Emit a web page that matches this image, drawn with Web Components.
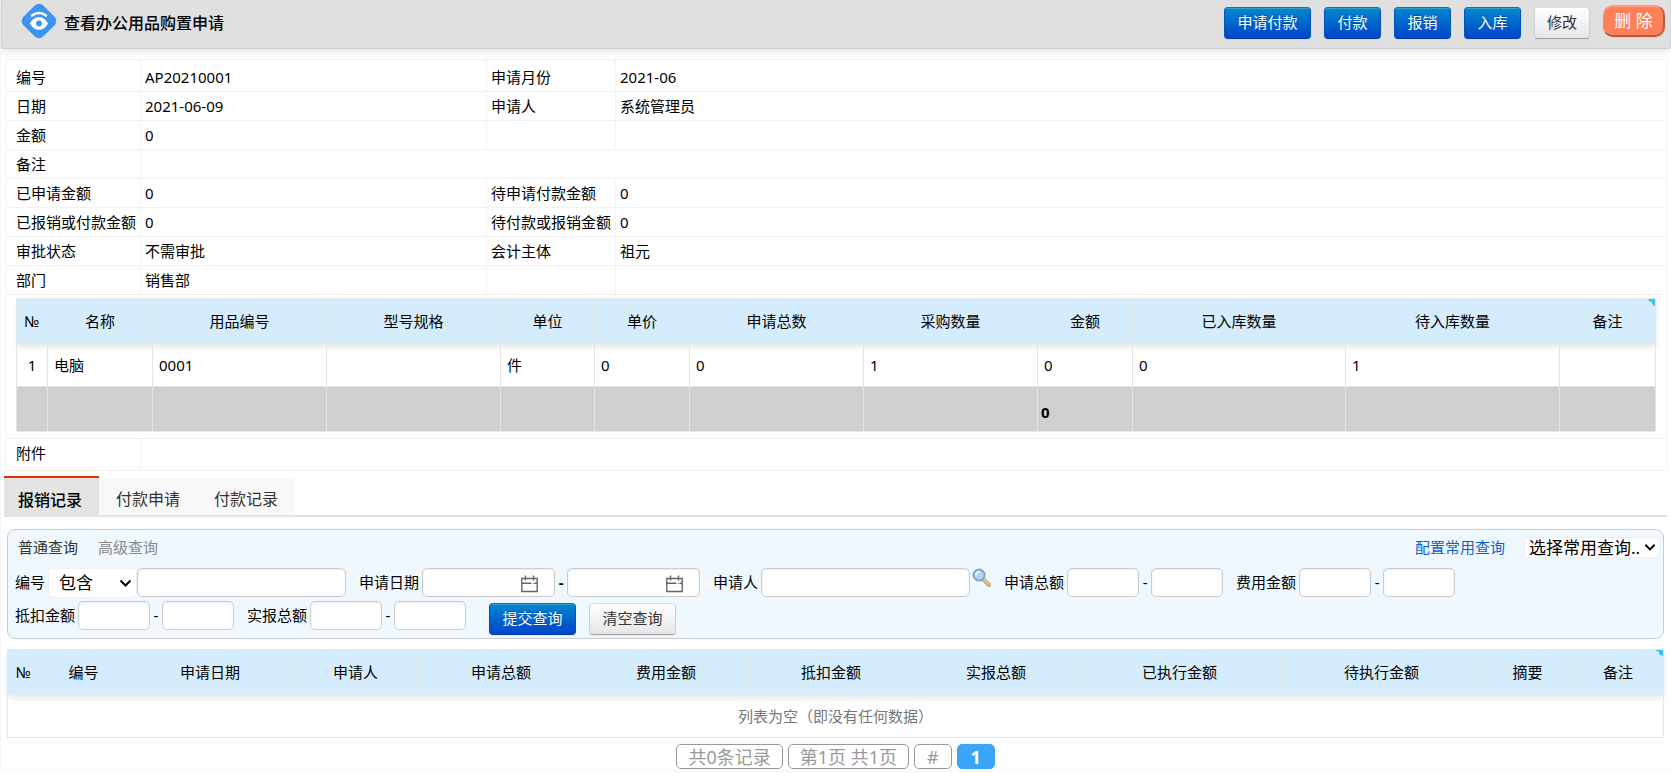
<!DOCTYPE html>
<html lang="zh-CN">
<head>
<meta charset="utf-8">
<title>查看办公用品购置申请</title>
<style>
  html { background: #fafafa; }
  body {
    margin: 0;
    color: #000;
    font: 15px/20px "Noto Sans", "Noto Sans CJK SC", sans-serif;
  }
</style>
</head>
<body>
<purchase-page></purchase-page>

<template id="tpl-page">
  <style>
    :host { display: block; background: #fff; border-left: 1px solid #f2f7fd; }
    .records { display: flex; flex-direction: column; gap: 10px; padding: 12px 7px 0 6px; }
    tab-strip { margin: 5px 4px 0 3px; }
    detail-sheet { margin: 10px 3px 0 4px; }
    page-pager { margin-top: -4px; }
  </style>
  <page-header heading="查看办公用品购置申请">
    <ui-button kind="primary" wide>申请付款</ui-button>
    <ui-button kind="primary">付款</ui-button>
    <ui-button kind="primary">报销</ui-button>
    <ui-button kind="primary">入库</ui-button>
    <ui-button>修改</ui-button>
    <ui-button kind="danger">删 除</ui-button>
  </page-header>
  <detail-sheet><data-grid id="items"></data-grid></detail-sheet>
  <tab-strip></tab-strip>
  <div class="records">
    <query-panel></query-panel>
    <data-grid id="records"></data-grid>
    <page-pager></page-pager>
  </div>
</template>

<template id="tpl-header">
  <style>
    :host {
      display: flex; align-items: flex-start; box-sizing: border-box; height: 49px;
      padding: 0 5px 0 19px; background: #e0e0e0;
      border: 1px solid #d0d3d8; border-top: 0; border-radius: 0 0 3px 3px;
      box-shadow: 0 2px 8px rgba(0,0,0,.13);
    }
    svg { width: 36px; height: 36px; margin-top: 3px; }
    h1 { flex: 1; margin: 12px 0 0 7px; font-size: 16px; line-height: 22px; font-weight: 500; }
    .actions { display: flex; gap: 13px; padding-top: 7px; }
  </style>
  <svg viewBox="0 0 36 36" aria-hidden="true">
    <rect x="4" y="4" width="28" height="28" rx="6" fill="#3d94ee" transform="rotate(45 18 18)"/>
    <path d="M9 20.500C11.500 16 14.500 14.300 18 14.300s6.500 1.700 9 6.200c-2.500 4.500-5.500 6.300-9 6.300s-6.500-1.800-9-6.300z" fill="#fff"/>
    <circle cx="18" cy="20.500" r="2.900" fill="#3d94ee"/>
    <path d="M11 12.500c4-3.300 10-3.300 14 0" fill="none" stroke="#fff" stroke-width="2.600" stroke-linecap="round"/>
  </svg>
  <h1></h1>
  <div class="actions"><slot></slot></div>
</template>

<template id="tpl-button">
  <style>
    :host { display: block; }
    button {
      display: block; box-sizing: border-box; height: 32px; min-width: 55px; padding: 0 12px 2px;
      font: inherit; line-height: 28px; color: #333; white-space: nowrap;
      border: 1px solid; border-color: #dcdcdc #d0d0d0 #a3a3a3; border-radius: 4px;
      background: linear-gradient(#fff, #e6e6e6);
      box-shadow: inset 0 1px 0 rgba(255,255,255,.2), 0 1px 2px rgba(0,0,0,.05);
    }
    :host([kind="primary"]) button {
      min-width: 57px; color: #fff; border-color: #0077b8 #0055b5 #0040a0;
      background: linear-gradient(#08c, #04c);
      text-shadow: 0 -1px 0 rgba(0,0,0,.25);
    }
    :host([wide]) button, :host([kind="primary"][wide]) button { min-width: 87px; }
    :host([kind="danger"]) { margin-top: -2px; }
    :host([kind="danger"]) button {
      width: 62px; padding: 0; font-size: 17px; color: #fff; background: #ff7f59;
      border-color: #f0a088 #c05a3c #b8563a #e8987c; border-width: 1px 2px 2px 1px; border-radius: 10px;
    }
  </style>
  <button type="button"><slot></slot></button>
</template>

<template id="tpl-sheet">
  <style>
    :host { display: block; }
    table { width: 100%; table-layout: fixed; border-collapse: collapse; border: 1px solid #ececec; }
    th, td { box-sizing: border-box; height: 29px; padding: 0 4px; border: 1px solid #f3f3f3; text-align: left; font-weight: 400; white-space: nowrap; }
    th:first-child { padding-left: 10px; }
    tr.edge > * { height: 32px; padding-top: 2px; }
    tr.last > * { padding-top: 0; padding-bottom: 3px; }
    td.nested { padding: 3px 11px 6px 10px; }
    .c1 { width: 135px; } .c2 { width: 346px; } .c3 { width: 129px; }
  </style>
  <table>
    <colgroup><col class="c1"><col class="c2"><col class="c3"><col></colgroup>
    <tbody>
      <tr class="edge"><th scope="row">编号</th><td>AP20210001</td><th scope="row">申请月份</th><td>2021-06</td></tr>
      <tr><th scope="row">日期</th><td>2021-06-09</td><th scope="row">申请人</th><td>系统管理员</td></tr>
      <tr><th scope="row">金额</th><td>0</td><td></td><td></td></tr>
      <tr><th scope="row">备注</th><td colspan="3"></td></tr>
      <tr><th scope="row">已申请金额</th><td>0</td><th scope="row">待申请付款金额</th><td>0</td></tr>
      <tr><th scope="row">已报销或付款金额</th><td>0</td><th scope="row">待付款或报销金额</th><td>0</td></tr>
      <tr><th scope="row">审批状态</th><td>不需审批</td><th scope="row">会计主体</th><td>祖元</td></tr>
      <tr><th scope="row">部门</th><td>销售部</td><td></td><td></td></tr>
      <tr><td class="nested" colspan="4"><slot></slot></td></tr>
      <tr class="edge last"><th scope="row">附件</th><td colspan="3"></td></tr>
    </tbody>
  </table>
</template>

<template id="tpl-grid">
  <style>
    :host { display: block; }
    table { width: 100%; table-layout: fixed; border-collapse: collapse; border: 1px solid #e3e5e8; }
    th, td { box-sizing: border-box; padding: 0 6px; border: 1px solid #e6e6e6; text-align: left; white-space: nowrap; }
    thead { box-shadow: 0 3px 6px rgba(0,0,0,.1); }
    thead th { height: 45px; padding: 0; text-align: center; font-weight: 400; background-color: #d5ecfc; border-color: #e2e8ec; }
    thead th:last-child {
      background-image: linear-gradient(to top right, transparent 50%, #38c2f5 50%);
      background-repeat: no-repeat; background-position: top right; background-size: 7px 7px;
    }
    tbody td { height: 43px; }
    tbody td:first-child, td.empty { text-align: center; }
    td.empty { color: #777; }
    tfoot td { height: 45px; padding: 5px 3px 0; background: #d0d0d0; font-weight: 700; }
  </style>
  <table><colgroup></colgroup><thead><tr></tr></thead><tbody></tbody><tfoot></tfoot></table>
</template>

<template id="tpl-tabs">
  <style>
    :host { display: flex; align-items: flex-end; border-bottom: 2px solid #e3e3e3; }
    button { box-sizing: border-box; height: 36px; padding: 2px 17px 0; border: 0; background: #f8f8f8; font: inherit; font-size: 16px; line-height: 36px; color: #333; }
    button[aria-selected="true"] { height: 39px; padding: 6px 17px 0 14px; border-top: 2px solid #e03000; background: #e4e4e4; color: #000; font-weight: 500; line-height: 32px; }
  </style>
  <button role="tab" aria-selected="true">报销记录</button>
  <button role="tab" aria-selected="false">付款申请</button>
  <button role="tab" aria-selected="false">付款记录</button>
</template>

<template id="tpl-query">
  <style>
    :host { display: block; box-sizing: border-box; height: 110px; padding: 5px 3px 3px 7px; background: #f0f8ff; border: 1px solid #ccc; border-radius: 8px; }
    .modes { display: flex; align-items: center; height: 24px; gap: 20px; padding-left: 3px; }
    a { color: #888; text-decoration: none; }
    a[aria-current] { color: #333; }
    a.setup { margin-left: auto; color: #0a62c4; }
    form { display: flex; flex-wrap: wrap; align-items: flex-start; gap: 3px 13px; margin-top: 9px; }
    .actions { display: flex; gap: 13px; margin: 2px 0 0 10px; }
  </style>
  <div class="modes">
    <a href="#basic" aria-current="true">普通查询</a>
    <a href="#advanced">高级查询</a>
    <a class="setup" href="#setup">配置常用查询</a>
    <ui-select size="saved" label="选择常用查询" value="选择常用查询.."></ui-select>
  </div>
  <form>
    <query-field label="编号" kind="match"></query-field>
    <query-field label="申请日期" kind="dates"></query-field>
    <query-field label="申请人" kind="person"></query-field>
    <query-field label="申请总额" kind="range"></query-field>
    <query-field label="费用金额" kind="range"></query-field>
    <query-field label="抵扣金额" kind="range"></query-field>
    <query-field label="实报总额" kind="range"></query-field>
    <div class="actions"><ui-button kind="primary" wide>提交查询</ui-button><ui-button wide>清空查询</ui-button></div>
  </form>
</template>

<template id="tpl-select">
  <style>
    :host { display: block; position: relative; width: 89px; height: 30px; }
    select {
      appearance: none; display: block; box-sizing: border-box; width: 100%; height: 100%; margin: 0; padding: 0 0 0 10px;
      font: inherit; font-size: 17px; color: #000; background: #fff; border: 1px solid #f0f0f0; border-radius: 5px;
    }
    svg { position: absolute; right: 5px; top: calc(50% - 4px); width: 13px; height: 9px; pointer-events: none; }
    :host([size="saved"]) { width: 136px; height: 21px; margin-left: -1px; }
    :host([size="saved"]) select { padding-left: 4px; line-height: 19px; }
    :host([size="saved"]) svg { right: 4px; width: 12px; }
  </style>
  <select><option></option></select>
  <svg viewBox="0 0 13 9" aria-hidden="true"><path d="M1.500 1.500l5 5 5-5" fill="none" stroke="#000" stroke-width="2"/></svg>
</template>

<template id="tpl-field">
  <style>
    :host { display: flex; line-height: 28px; }
    label { margin-right: 3px; }
    input { box-sizing: border-box; width: 72px; height: 29px; margin: 0; padding: 0 6px; font: inherit; background: #fff; border: 1px solid #ccc; border-radius: 5px; box-shadow: inset 0 1px 2px rgba(0,0,0,.08); }
    .dash { width: 12px; text-align: center; }
    .date { position: relative; }
    .date input { display: block; width: 133px; padding-right: 36px; }
    .date svg { position: absolute; right: 17px; top: 7px; width: 17px; height: 18px; }
    input.text { width: 209px; }
    button { width: 19px; height: 19px; margin-left: 2px; padding: 0; border: 0; background: none; }
    button svg { display: block; width: 19px; height: 19px; }
    b.dash { font-weight: 700; }
  </style>
</template>

<template id="tpl-pager">
  <style>
    :host { display: flex; justify-content: center; gap: 5px; height: 25px; font-size: 18px; color: #999; }
    span, a { box-sizing: border-box; height: 25px; padding: 0 11px; border: 1px solid #999; border-radius: 5px; line-height: 24px; color: inherit; text-decoration: none; }
    a.jump, a.current { padding: 0 12px; }
    a.current { min-width: 38px; text-align: center; background: #3ba6f8; border-color: #3ba6f8; color: #fff; font-weight: 700; }
  </style>
  <span>共0条记录</span><span>第1页 共1页</span><a class="jump" href="#jump">#</a><a class="current" href="#1">1</a>
</template>

<script>
  class BaseElement extends HTMLElement {
    constructor() {
      super();
      this.attachShadow({ mode: 'open' });
      this.shadowRoot.append(document.getElementById(this.constructor.tpl).content.cloneNode(true));
    }
    $(selector) { return this.shadowRoot.querySelector(selector); }
  }

  class UiButton extends BaseElement { static tpl = 'tpl-button'; }
  class PageHeader extends BaseElement {
    static tpl = 'tpl-header';
    connectedCallback() { this.$('h1').textContent = this.getAttribute('heading'); }
  }
  class DetailSheet extends BaseElement { static tpl = 'tpl-sheet'; }
  class TabStrip extends BaseElement {
    static tpl = 'tpl-tabs';
    connectedCallback() { this.setAttribute('role', 'tablist'); }
  }
  class PagePager extends BaseElement { static tpl = 'tpl-pager'; }
  class UiSelect extends BaseElement {
    static tpl = 'tpl-select';
    connectedCallback() {
      this.$('select').setAttribute('aria-label', this.getAttribute('label'));
      this.$('option').textContent = this.getAttribute('value');
    }
  }

  const CALENDAR = `<svg viewBox="0 0 17 18" aria-hidden="true" fill="none" stroke="#666" stroke-width="1.400">
    <path d="M.8 3.500h15.400v13H.8zM.8 8.200h9.500M13.600 8.200h2.600M4.500.5v5M12.500.5v5M12.500 8.200v.800"/></svg>`;
  const MAGNIFIER = `<svg viewBox="0 0 19 19" aria-hidden="true">
    <path d="M11.500 11.500l5.500 5.500" stroke="#c9a679" stroke-width="4" stroke-linecap="round"/>
    <path d="M11.500 11l5.500 5.500" stroke="#e6cba4" stroke-width="1.500" stroke-linecap="round"/>
    <circle cx="7" cy="7" r="5.600" fill="#aed4f7" stroke="#7f9fc4" stroke-width="1.800"/>
    <path d="M4 7.500c0-2 1.500-3.500 3.500-3.500" stroke="#e3f1fd" stroke-width="1.800" fill="none"/></svg>`;

  class QueryField extends BaseElement {
    static tpl = 'tpl-field';
    connectedCallback() {
      const label = this.getAttribute('label');
      const end = `aria-label="${label}（止）"`;
      const parts = {
        match: `<ui-select label="${label}匹配方式" value="包含"></ui-select><input id="f" class="text">`,
        dates: `<span class="date"><input id="f">${CALENDAR}</span><b class="dash">-</b><span class="date"><input ${end}>${CALENDAR}</span>`,
        person: `<input id="f" class="text"><button type="button" aria-label="选择${label}">${MAGNIFIER}</button>`,
        range: `<input id="f"><span class="dash">-</span><input ${end}>`
      };
      this.shadowRoot.innerHTML += `<label for="f">${label}</label>${parts[this.getAttribute('kind')]}`;
    }
  }
  class QueryPanel extends BaseElement { static tpl = 'tpl-query'; }

  class DataGrid extends BaseElement {
    static tpl = 'tpl-grid';
    set data({ columns, rows = [], totals, empty }) {
      const cells = row => '<tr>' + row.map(v => `<td>${v}</td>`).join('') + '</tr>';
      this.$('colgroup').innerHTML = columns.map(([, w]) => `<col style="width:${w}px">`).join('');
      this.$('thead tr').innerHTML = columns.map(([name]) => `<th scope="col">${name}</th>`).join('');
      this.$('tbody').innerHTML = rows.length ? rows.map(cells).join('')
        : `<tr><td class="empty" colspan="${columns.length}">${empty}</td></tr>`;
      if (totals) this.$('tfoot').innerHTML = cells(totals);
    }
  }

  class PurchasePage extends BaseElement {
    static tpl = 'tpl-page';
    connectedCallback() {
      this.$('#items').data = {
        columns: [['№', 31], ['名称', 105], ['用品编号', 174], ['型号规格', 174], ['单位', 94], ['单价', 95],
          ['申请总数', 174], ['采购数量', 174], ['金额', 95], ['已入库数量', 213], ['待入库数量', 214], ['备注', 96]],
        rows: [['1', '电脑', '0001', '', '件', '0', '0', '1', '0', '0', '1', '']],
        totals: ['', '', '', '', '', '', '', '', '0', '', '', '']
      };
      this.$('#records').data = {
        columns: [['№', 32], ['编号', 88], ['申请日期', 165], ['申请人', 126], ['申请总额', 165], ['费用金额', 165],
          ['抵扣金额', 165], ['实报总额', 165], ['已执行金额', 202], ['待执行金额', 202], ['摘要', 90], ['备注', 91]],
        empty: '列表为空（即没有任何数据）'
      };
    }
  }

  customElements.define('ui-button', UiButton);
  customElements.define('ui-select', UiSelect);
  customElements.define('page-header', PageHeader);
  customElements.define('data-grid', DataGrid);
  customElements.define('detail-sheet', DetailSheet);
  customElements.define('tab-strip', TabStrip);
  customElements.define('query-field', QueryField);
  customElements.define('query-panel', QueryPanel);
  customElements.define('page-pager', PagePager);
  customElements.define('purchase-page', PurchasePage);
</script>
</body>
</html>
